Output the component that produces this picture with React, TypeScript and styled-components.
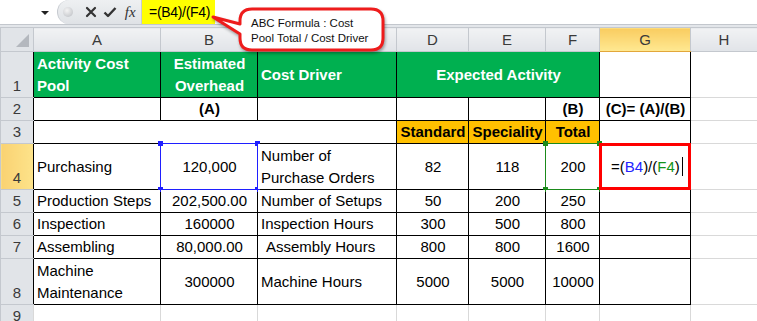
import React from "react";
import styled, { createGlobalStyle } from "styled-components";

const GlobalStyle = createGlobalStyle`
  html, body { margin: 0; padding: 0; background: #fff; }
  body { font-family: "Liberation Sans", Arial, sans-serif; overflow: hidden; }
`;

const Page = styled.div`
  position: relative;
  width: 757px;
  height: 321px;
  overflow: hidden;
  background: #fff;
`;

const FormulaBar = styled.div`
  display: flex;
  align-items: stretch;
  height: 25px;
  box-sizing: border-box;
  border-bottom: 1px solid #c3c7cd;
  background: #fff;
`;

const BarGap = styled.div`
  height: 2px;
  background: #e3e6ea;
`;

const NameBox = styled.div`
  position: relative;
  width: 57px;
  background: #fff;
`;

const DropArrow = styled.span`
  position: absolute;
  left: 41px;
  top: 11px;
  width: 0;
  height: 0;
  border-left: 4px solid transparent;
  border-right: 4px solid transparent;
  border-top: 4px solid #222;
`;

const ButtonStrip = styled.div`
  display: flex;
  align-items: center;
  width: 83px;
  background: linear-gradient(#eef0f2, #dfe2e6);
  border-radius: 12px 0 0 12px;
  border-left: 1px solid #c6cad0;
`;

const Knob = styled.span`
  width: 10px;
  height: 10px;
  margin: 0 9px 0 5px;
  border-radius: 50%;
  background: radial-gradient(circle at 40% 35%, #f4f4f4, #b9bcc1);
`;

const BarIcon = styled.span`
  display: flex;
  align-items: center;
  justify-content: center;
  width: 19px;
  height: 20px;
`;

const Fx = styled.span`
  font-family: "Liberation Serif", "Times New Roman", serif;
  font-style: italic;
  font-size: 15px;
  color: #333;
  width: 22px;
  text-align: center;
`;

const FormulaInput = styled.div`
  flex: 1;
  display: flex;
  align-items: stretch;
  font-size: 14px;
  border-left: 1px solid #c6cad0;
`;

const Highlight = styled.span`
  display: flex;
  align-items: center;
  padding: 0 5px 0 7px;
  letter-spacing: -0.3px;
  background: #ffff00;
  color: #000;
`;

const Sheet = styled.table`
  border-collapse: collapse;
  table-layout: fixed;
  width: 757px;
  font-size: 15px;
`;

const ColHead = styled.th<{ $active?: boolean }>`
  height: 23px;
  padding: 0;
  font-weight: 400;
  color: #3a3a3a;
  text-align: center;
  vertical-align: middle;
  border: 1px solid #c4c8ce;
  background: ${(p) =>
    p.$active ? "linear-gradient(#f9cc60, #ffe992)" : "linear-gradient(#f1f2f4, #e1e4e8)"};
  border-bottom-color: ${(p) => (p.$active ? "#e2a73a" : "#c4c8ce")};
`;

const Corner = styled.th`
  position: relative;
  padding: 0;
  border: 1px solid #c4c8ce;
  background: #e1e4e8;
`;

const CornerMark = styled.span`
  position: absolute;
  right: 4px;
  bottom: 4px;
  width: 0;
  height: 0;
  border-left: 13px solid transparent;
  border-bottom: 13px solid #b4b8be;
`;

const RowHead = styled.th<{ $active?: boolean }>`
  padding: 0 0 1px;
  font-weight: 400;
  color: #3a3a3a;
  text-align: center;
  vertical-align: bottom;
  line-height: 20px;
  border: 1px solid #c4c8ce;
  border-right: none;
  background: ${(p) => (p.$active ? "linear-gradient(90deg, #f9d272, #fde38a)" : "#e1e4e8")};
`;

const Row = styled.tr<{ $h: number }>`
  height: ${(p) => p.$h}px;
`;

const Cell = styled.td<{
  $bg?: string;
  $center?: boolean;
  $bold?: boolean;
  $light?: boolean;
  $boxed?: boolean;
  $indent?: number;
}>`
  position: relative;
  padding: 0 2px 0 ${(p) => p.$indent ?? 3}px;
  border: 1px solid ${(p) => (p.$boxed ? "#000" : "#d9d9d9")};
  background: ${(p) => p.$bg ?? "#fff"};
  color: ${(p) => (p.$light ? "#fff" : "#000")};
  font-weight: ${(p) => (p.$bold ? 700 : 400)};
  text-align: ${(p) => (p.$center ? "center" : "left")};
  vertical-align: middle;
  line-height: 22px;
  white-space: nowrap;
`;

const Frame = styled.span<{ $color: string; $width: number }>`
  position: absolute;
  inset: -1px;
  border: ${(p) => p.$width}px solid ${(p) => p.$color};
  pointer-events: none;
`;

const Handle = styled.span<{ $color: string; $x: "l" | "r"; $y: "t" | "b" }>`
  position: absolute;
  width: 5px;
  height: 5px;
  background: ${(p) => p.$color};
  ${(p) => (p.$x === "l" ? "left: -3px;" : "right: -3px;")}
  ${(p) => (p.$y === "t" ? "top: -3px;" : "bottom: -3px;")}
`;

const Ref = styled.span<{ $color: string }>`
  color: ${(p) => p.$color};
`;

const Caret = styled.span`
  display: inline-block;
  width: 1px;
  height: 19px;
  margin-left: 2px;
  vertical-align: -4px;
  background: #000;
`;

const Callout = styled.div`
  position: absolute;
  left: 207px;
  top: 4px;
  width: 182px;
  height: 52px;
`;

const CalloutShape = styled.svg`
  position: absolute;
  inset: 0;
  filter: drop-shadow(1px 2px 1.5px rgba(0, 0, 0, 0.35));
`;

const CalloutText = styled.div`
  position: absolute;
  left: 44px;
  top: 12px;
  font-size: 11.5px;
  line-height: 15px;
  color: #111;
  white-space: nowrap;
`;

const GREEN = "#00b050";
const ORANGE = "#ffc000";

const widths = [33, 127, 97, 139, 72, 77, 54, 91, 67];
const letters = ["A", "B", "C", "D", "E", "F", "G", "H"];

const simpleRows = [
  { n: 5, pool: "Production Steps", cost: "202,500.00", driver: "Number of Setups", d: "50", e: "200", f: "250" },
  { n: 6, pool: "Inspection", cost: "160000", driver: "Inspection Hours", d: "300", e: "500", f: "800" },
  { n: 7, pool: "Assembling", cost: "80,000.00", driver: "Assembly Hours", d: "800", e: "800", f: "1600", pad: 8 },
];

const Handles = ({ color }: { color: string }) => (
  <>
    <Handle $color={color} $x="l" $y="t" />
    <Handle $color={color} $x="r" $y="t" />
    <Handle $color={color} $x="l" $y="b" />
    <Handle $color={color} $x="r" $y="b" />
  </>
);

export default function App() {
  return (
    <Page>
      <GlobalStyle />
      <FormulaBar>
        <NameBox>
          <DropArrow />
        </NameBox>
        <ButtonStrip>
          <Knob />
          <BarIcon>
            <svg width="12" height="12" viewBox="0 0 12 12">
              <path d="M2 2 L10 10 M10 2 L2 10" stroke="#333" strokeWidth="2.2" strokeLinecap="round" />
            </svg>
          </BarIcon>
          <BarIcon>
            <svg width="14" height="12" viewBox="0 0 14 12">
              <path d="M1.5 6.5 L5 10 L12.5 2" stroke="#333" strokeWidth="2.4" fill="none" strokeLinejoin="round" />
            </svg>
          </BarIcon>
          <Fx>fx</Fx>
        </ButtonStrip>
        <FormulaInput>
          <Highlight>=(B4)/(F4)</Highlight>
        </FormulaInput>
      </FormulaBar>
      <BarGap />

      <Sheet>
        <colgroup>
          {widths.map((w, i) => (
            <col key={i} style={{ width: w }} />
          ))}
        </colgroup>
        <thead>
          <tr>
            <Corner>
              <CornerMark />
            </Corner>
            {letters.map((l) => (
              <ColHead key={l} $active={l === "G"}>
                {l}
              </ColHead>
            ))}
          </tr>
        </thead>
        <tbody>
          <Row $h={46}>
            <RowHead>1</RowHead>
            <Cell $boxed $bg={GREEN} $light $bold>
              Activity Cost
              <br />
              Pool
            </Cell>
            <Cell $boxed $bg={GREEN} $light $bold $center>
              Estimated
              <br />
              Overhead
            </Cell>
            <Cell $boxed $bg={GREEN} $light $bold>
              Cost Driver
            </Cell>
            <Cell $boxed $bg={GREEN} $light $bold $center colSpan={3}>
              Expected Activity
            </Cell>
            <Cell $boxed />
            <Cell />
          </Row>
          <Row $h={23}>
            <RowHead>2</RowHead>
            <Cell $boxed />
            <Cell $boxed $bold $center>
              (A)
            </Cell>
            <Cell $boxed />
            <Cell $boxed />
            <Cell $boxed />
            <Cell $boxed $bold $center>
              (B)
            </Cell>
            <Cell $boxed $bold $center>
              (C)= (A)/(B)
            </Cell>
            <Cell />
          </Row>
          <Row $h={23}>
            <RowHead>3</RowHead>
            <Cell $boxed colSpan={3} />
            <Cell $boxed $bg={ORANGE} $bold $center>
              Standard
            </Cell>
            <Cell $boxed $bg={ORANGE} $bold $center>
              Speciality
            </Cell>
            <Cell $boxed $bg={ORANGE} $bold $center>
              Total
            </Cell>
            <Cell $boxed />
            <Cell />
          </Row>
          <Row $h={46}>
            <RowHead $active>4</RowHead>
            <Cell $boxed>Purchasing</Cell>
            <Cell $boxed $center>
              120,000
              <Frame $color="#1f1fff" $width={1} />
              <Handles color="#1f1fff" />
            </Cell>
            <Cell $boxed>
              Number of
              <br />
              Purchase Orders
            </Cell>
            <Cell $boxed $center>
              82
            </Cell>
            <Cell $boxed $center>
              118
            </Cell>
            <Cell $boxed $center>
              200
              <Frame $color="#1b8a1b" $width={1} />
              <Handles color="#1b8a1b" />
            </Cell>
            <Cell $boxed $indent={11}>
              =(<Ref $color="#2323ff">B4</Ref>)/(<Ref $color="#14941a">F4</Ref>)
              <Caret />
              <Frame $color="#ff0000" $width={3} />
            </Cell>
            <Cell />
          </Row>
          {simpleRows.map((r) => (
            <Row $h={23} key={r.n}>
              <RowHead>{r.n}</RowHead>
              <Cell $boxed>{r.pool}</Cell>
              <Cell $boxed $center>
                {r.cost}
              </Cell>
              <Cell $boxed $indent={r.pad}>
                {r.driver}
              </Cell>
              <Cell $boxed $center>
                {r.d}
              </Cell>
              <Cell $boxed $center>
                {r.e}
              </Cell>
              <Cell $boxed $center>
                {r.f}
              </Cell>
              <Cell $boxed />
              <Cell />
            </Row>
          ))}
          <Row $h={46}>
            <RowHead>8</RowHead>
            <Cell $boxed>
              Machine
              <br />
              Maintenance
            </Cell>
            <Cell $boxed $center>
              300000
            </Cell>
            <Cell $boxed>Machine Hours</Cell>
            <Cell $boxed $center>
              5000
            </Cell>
            <Cell $boxed $center>
              5000
            </Cell>
            <Cell $boxed $center>
              10000
            </Cell>
            <Cell $boxed />
            <Cell />
          </Row>
          <Row $h={23}>
            <RowHead>9</RowHead>
            <Cell />
            <Cell />
            <Cell />
            <Cell />
            <Cell />
            <Cell />
            <Cell />
            <Cell />
          </Row>
        </tbody>
      </Sheet>

      <Callout>
        <CalloutShape width="182" height="52" viewBox="0 0 182 52">
          <path
            d="M45 5 H164 Q176 5 176 17 V34 Q176 46 164 46 H45 Q33 46 33 34 V30 L6 13 L33 20 V17 Q33 5 45 5 Z"
            fill="#fff"
            stroke="#ee1c1c"
            strokeWidth="3"
            strokeLinejoin="round"
          />
        </CalloutShape>
        <CalloutText>
          ABC Formula : Cost
          <br />
          Pool Total / Cost Driver
        </CalloutText>
      </Callout>
    </Page>
  );
}
